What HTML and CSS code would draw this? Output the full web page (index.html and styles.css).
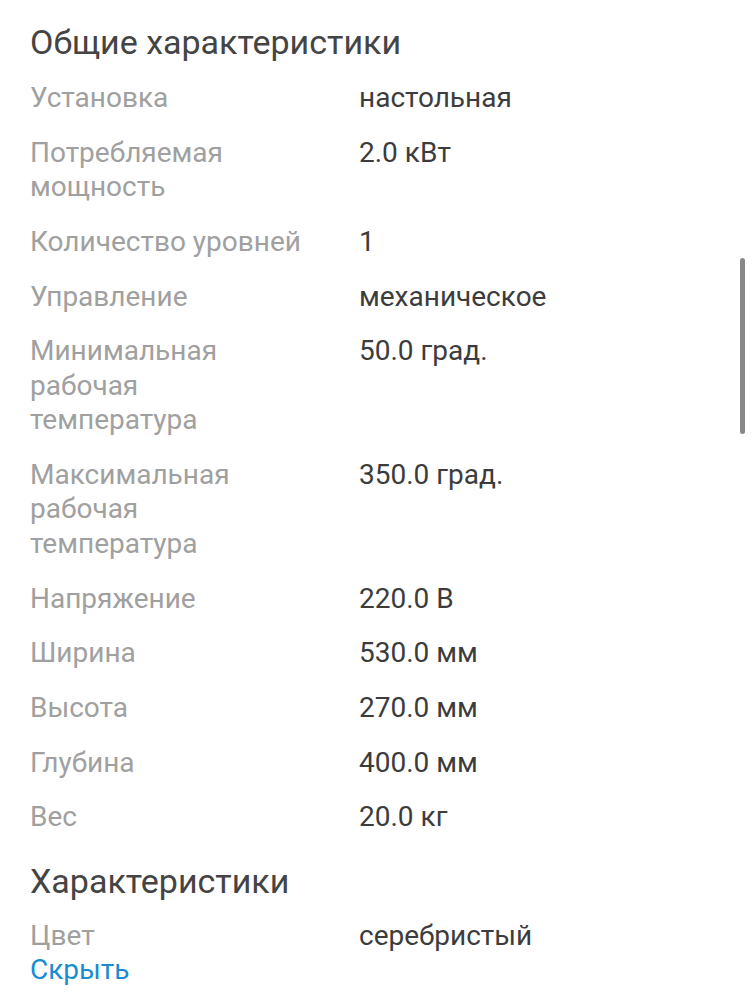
FILE: index.html
```html
<!DOCTYPE html>
<html lang="ru">
<head>
<meta charset="utf-8">
<link rel="stylesheet" href="styles.css">
</head>
<body>
<main class="page">
  <h2 class="section-title first">Общие характеристики</h2>
  <dl class="specs">
    <dt>Установка</dt><dd>настольная</dd>
    <dt>Потребляемая мощность</dt><dd>2.0 кВт</dd>
    <dt>Количество уровней</dt><dd>1</dd>
    <dt>Управление</dt><dd>механическое</dd>
    <dt>Минимальная рабочая температура</dt><dd>50.0 град.</dd>
    <dt>Максимальная рабочая температура</dt><dd>350.0 град.</dd>
    <dt>Напряжение</dt><dd>220.0 В</dd>
    <dt>Ширина</dt><dd>530.0 мм</dd>
    <dt>Высота</dt><dd>270.0 мм</dd>
    <dt>Глубина</dt><dd>400.0 мм</dd>
    <dt>Вес</dt><dd>20.0 кг</dd>
  </dl>
  <h2 class="section-title">Характеристики</h2>
  <dl class="specs">
    <dt>Цвет</dt><dd>серебристый</dd>
  </dl>
  <a class="toggle" href="#">Скрыть</a>
</main>
<div class="scrollbar"></div>
</body>
</html>
```
FILE: styles.css
```css
html, body {
  margin: 0;
  padding: 0;
  background: #ffffff;
}
body {
  font-family: Roboto, "Noto Sans", sans-serif;
  width: 752px;
  height: 1000px;
  overflow: hidden;
  position: relative;
}
.page {
  padding: 22px 30px 0 30px;
}
.section-title {
  margin: 26px 0 18px 0;
  font-size: 34px;
  line-height: 40px;
  font-weight: 400;
  color: #444444;
}
.section-title.first {
  margin-top: 0;
  margin-bottom: 19px;
}
.specs {
  display: grid;
  grid-template-columns: 329px 1fr;
  row-gap: 20.2px;
  margin: 0;
  font-size: 28px;
  line-height: 34.5px;
}
.specs dt {
  color: #a0a0a0;
  padding-right: 53px;
}
.specs dd {
  margin: 0;
  color: #3c3c3c;
}
.toggle {
  display: block;
  font-size: 28px;
  line-height: 34px;
  color: #1a8bd0;
  text-decoration: none;
}
.scrollbar {
  position: absolute;
  left: 740px;
  top: 258px;
  width: 5px;
  height: 176px;
  border-radius: 3px;
  background: #888888;
}
```
